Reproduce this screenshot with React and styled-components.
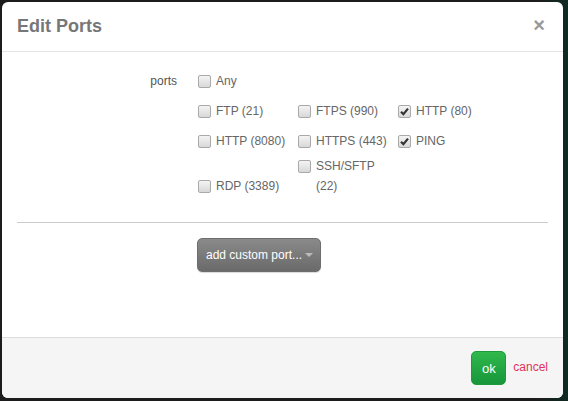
import React from 'react'
import styled, { createGlobalStyle } from 'styled-components'

const GlobalStyle = createGlobalStyle`
  html, body {
    margin: 0;
    padding: 0;
    background: #1f2322;
    font-family: "Liberation Sans", Arial, sans-serif;
  }
`

// wrap: label runs onto two lines inside its 100px column
const ports = [
  { name: 'FTP (21)' },
  { name: 'FTPS (990)' },
  { name: 'HTTP (80)', checked: true },
  { name: 'HTTP (8080)' },
  { name: 'HTTPS (443)' },
  { name: 'PING', checked: true },
  { name: 'RDP (3389)' },
  { name: 'SSH/SFTP (22)', wrap: true },
]

const Check = ({ checked }) => (
  <Box>
    {checked && (
      <svg width="11" height="11" viewBox="0 0 11 11">
        <path d="M2 5.8 L4.4 8.2 L9 2.6" fill="none" stroke="#333" strokeWidth="2.2" />
      </svg>
    )}
  </Box>
)

export default function App() {
  return (
    <>
      <GlobalStyle />
      <Page>
        <Modal>
          <Header>
            <Title>Edit Ports</Title>
            <Close>×</Close>
          </Header>
          <Body>
            <FieldRow>
              <Label>ports</Label>
              <Grid>
                <Option $full>
                  <Check />
                  <OptText>Any</OptText>
                </Option>
                {ports.map(p => (
                  <Option key={p.name} $wrap={p.wrap}>
                    <Check checked={p.checked} />
                    <OptText>{p.name}</OptText>
                  </Option>
                ))}
              </Grid>
            </FieldRow>
            <Divider />
            <ButtonRow>
              <DropButton>
                add custom port...
                <Caret />
              </DropButton>
            </ButtonRow>
          </Body>
          <Footer>
            <OkButton>ok</OkButton>
            <Cancel>cancel</Cancel>
          </Footer>
        </Modal>
      </Page>
    </>
  )
}

const Page = styled.div`
  width: 568px;
  height: 401px;
  padding: 2px 5px 3px 2px;
  box-sizing: border-box;
  background: linear-gradient(90deg, #1c1c1c 0%, #1c1c1c 94%, #0f2a22 100%);
`

const Modal = styled.div`
  width: 561px;
  height: 396px;
  background: #fff;
  border-radius: 6px;
  display: flex;
  flex-direction: column;
  overflow: hidden;
`

const Header = styled.div`
  height: 49px;
  border-bottom: 1px solid #e5e5e5;
  display: flex;
  align-items: center;
  justify-content: space-between;
  padding: 0 18px 0 15px;
`

const Title = styled.h3`
  margin: 0;
  font-size: 18px;
  font-weight: bold;
  color: #777;
`

const Close = styled.span`
  font-size: 20px;
  font-weight: bold;
  color: #999;
  line-height: 1;
  margin-top: -4px;
`

const Body = styled.div`
  flex: 1;
  padding: 19px 15px 0 15px;
`

const FieldRow = styled.div`
  display: flex;
  gap: 21px;
`

const Label = styled.div`
  width: 160px;
  text-align: right;
  font-size: 12px;
  color: #555;
  line-height: 20px;
`

const Grid = styled.div`
  width: 300px;
  display: flex;
  flex-wrap: wrap;
  align-items: flex-end;
  row-gap: 10px;
`

const Option = styled.label`
  display: flex;
  align-items: flex-start;
  width: ${p => (p.$full ? '300px' : '100px')};
  margin-top: ${p => (p.$wrap ? '-5px' : '0')};
  box-sizing: border-box;
  padding-right: 2px;
`

const Box = styled.span`
  flex: none;
  width: 11px;
  height: 11px;
  border: 1px solid #a9a9a9;
  border-radius: 2px;
  background: linear-gradient(#f4f4f4, #d8d8d8);
  display: inline-flex;
  align-items: center;
  justify-content: center;
  margin: 4px 5px 0 0;
`

const OptText = styled.span`
  font-size: 12px;
  line-height: 20px;
  color: #666;
`

const Divider = styled.hr`
  border: 0;
  border-top: 1px solid #ccc;
  margin: 26px 0 15px 0;
`

const ButtonRow = styled.div`
  padding-left: 180px;
`

const DropButton = styled.button`
  display: inline-flex;
  align-items: center;
  height: 34px;
  padding: 0 7px 0 8px;
  border: 1px solid #6e6e6e;
  border-radius: 5px;
  background: linear-gradient(#8a8a8a, #6a6a6a);
  color: #fff;
  font-family: "Liberation Sans", Arial, sans-serif;
  font-size: 12px;
  box-shadow: 0 1px 1px rgba(0, 0, 0, 0.15);
`

const Caret = styled.span`
  display: inline-block;
  margin-left: 3px;
  border-left: 4px solid transparent;
  border-right: 4px solid transparent;
  border-top: 4px solid #bbb;
`

const Footer = styled.div`
  height: 60px;
  border-top: 1px solid #ddd;
  background: #f5f5f5;
  display: flex;
  align-items: center;
  justify-content: flex-end;
  padding: 0 15px 0 0;
  gap: 7px;
`

const OkButton = styled.button`
  width: 35px;
  height: 34px;
  border: 1px solid #1d9a3a;
  border-radius: 5px;
  background: linear-gradient(#30b84c, #17963a);
  color: #fff;
  font-family: "Liberation Sans", Arial, sans-serif;
  font-size: 13px;
  padding: 0;
`

const Cancel = styled.a`
  font-size: 12px;
  color: #e0335c;
  margin-top: -2px;
`
